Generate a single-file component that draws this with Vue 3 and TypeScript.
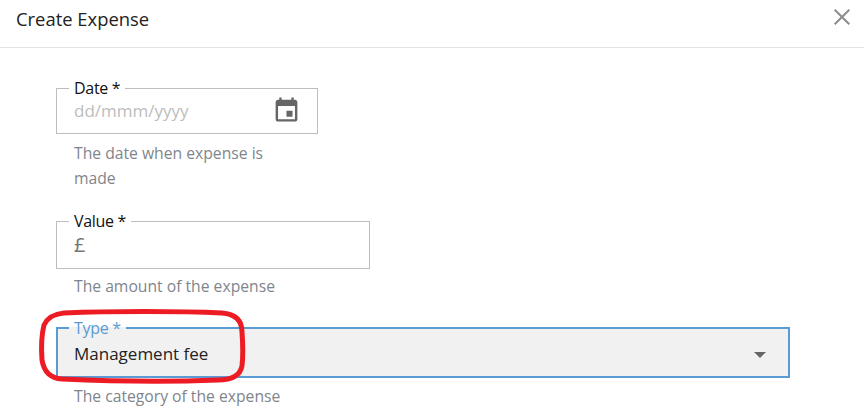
<script setup lang="ts">
import { ref } from "vue";

const expenseType = ref("Management fee");
</script>

<template>
  <div class="dialog">
    <header class="head">
      <h1 class="title">Create Expense</h1>
      <button class="close" type="button" aria-label="Close">
        <svg width="16" height="16" viewBox="0 0 16 16">
          <path d="M.7.7 15.300 15.300M15.300.7.7 15.300" stroke="#8c8c8c" stroke-width="2" fill="none" />
        </svg>
      </button>
    </header>

    <form class="form">
      <div class="field date">
        <fieldset class="box">
          <legend>Date *</legend>
          <div class="row">
            <span class="placeholder">dd/mmm/yyyy</span>
            <svg class="cal" width="29" height="29" viewBox="0 0 24 24">
              <path fill="#666" d="M19 4h-1V2h-2v2H8V2H6v2H5c-1.100 0-2 .9-2 2v14c0 1.100.9 2 2 2h14c1.100 0 2-.9 2-2V6c0-1.100-.9-2-2-2zm0 16H5V9h14v11zm-7-7h5v5h-5z" />
            </svg>
          </div>
        </fieldset>
        <p class="help">The date when expense is made</p>
      </div>

      <div class="field value">
        <fieldset class="box">
          <legend>Value *</legend>
          <div class="row"><span class="currency">£</span></div>
        </fieldset>
        <p class="help">The amount of the expense</p>
      </div>

      <div class="field type">
        <fieldset class="box focus">
          <legend>Type *</legend>
          <div class="row">
            <span class="selected">{{ expenseType }}</span>
            <span class="arrow"></span>
          </div>
        </fieldset>
        <p class="help">The category of the expense</p>
      </div>
    </form>

    <svg class="annotation" width="864" height="416" viewBox="0 0 864 416" aria-hidden="true">
      <path d="M64 313C110 311 180 311 222 313C235 314 242 320 242 332C243 346 243 358 242 366C240 376 232 380 218 380C170 382 105 381 62 379C50 378 44 372 42 360C41 346 42 333 44 325C48 317 54 314 64 313Z" fill="none" stroke="#ed1c24" stroke-width="5" />
    </svg>
  </div>
</template>

<style>
html, body { margin: 0; background: #fff; }
</style>

<style scoped>
.dialog {
  position: relative;
  width: 864px;
  height: 416px;
  overflow: hidden;
  background: #fff;
  font-family: "Open Sans", sans-serif;
  color: #222;
}
.head {
  display: flex;
  align-items: center;
  justify-content: space-between;
  box-sizing: border-box;
  height: 48px;
  padding: 0 14px 10px 16px;
  border-bottom: 1px solid #e4e4e4;
}
.title {
  margin: 0;
  font-size: 18.400px;
  font-weight: 400;
  line-height: 24px;
  color: #222;
}
.close {
  display: flex;
  margin-top: -3px;
  padding: 0;
  border: 0;
  background: none;
}
.form {
  display: flex;
  flex-direction: column;
  padding: 31px 0 0 56px;
}
.field { display: flex; flex-direction: column; }
.date { width: 262px; height: 133px; }
.value { width: 314px; height: 107px; }
.type { width: 734px; }
.box {
  box-sizing: border-box;
  margin: 0;
  padding: 0 17px;
  min-width: 0;
  border: 1px solid #bdbdbd;
  background: #fff;
}
.box legend {
  padding: 0 5px;
  margin-left: -5px;
  font-size: 16px;
  letter-spacing: -0.3px;
  line-height: 18px;
  color: #111;
}
.row {
  display: flex;
  align-items: center;
  justify-content: space-between;
  height: 36px;
  font-size: 17px;
}
.date .row { margin-top: -5px; }
.date .box { height: 55px; }
.placeholder { color: #bdbdbd; }
.cal { margin-right: -1px; margin-top: -2px; }
.currency { color: #757575; font-size: 20px; margin-top: -8px; }
.value .box { height: 57px; }
.focus {
  height: 59px;
  padding: 0 16px;
  border: 2px solid #5b9bd5;
  background: #f1f1f1;
}
.focus legend { color: #5b9bd5; }
.selected { color: #222; margin-top: -4px; }
.arrow {
  width: 0;
  height: 0;
  margin-right: 6px;
  border-left: 6px solid transparent;
  border-right: 6px solid transparent;
  border-top: 6px solid #666;
}
.help {
  margin: 7px 0 0;
  padding-left: 18px;
  font-size: 15.700px;
  line-height: 25px;
  color: #80858c;
}
.value .help { margin-top: 5px; }
.date .help { padding-right: 40px; }
.type .help { margin-top: 6px; }
.annotation {
  position: absolute;
  top: 0;
  left: 0;
  pointer-events: none;
}
</style>
